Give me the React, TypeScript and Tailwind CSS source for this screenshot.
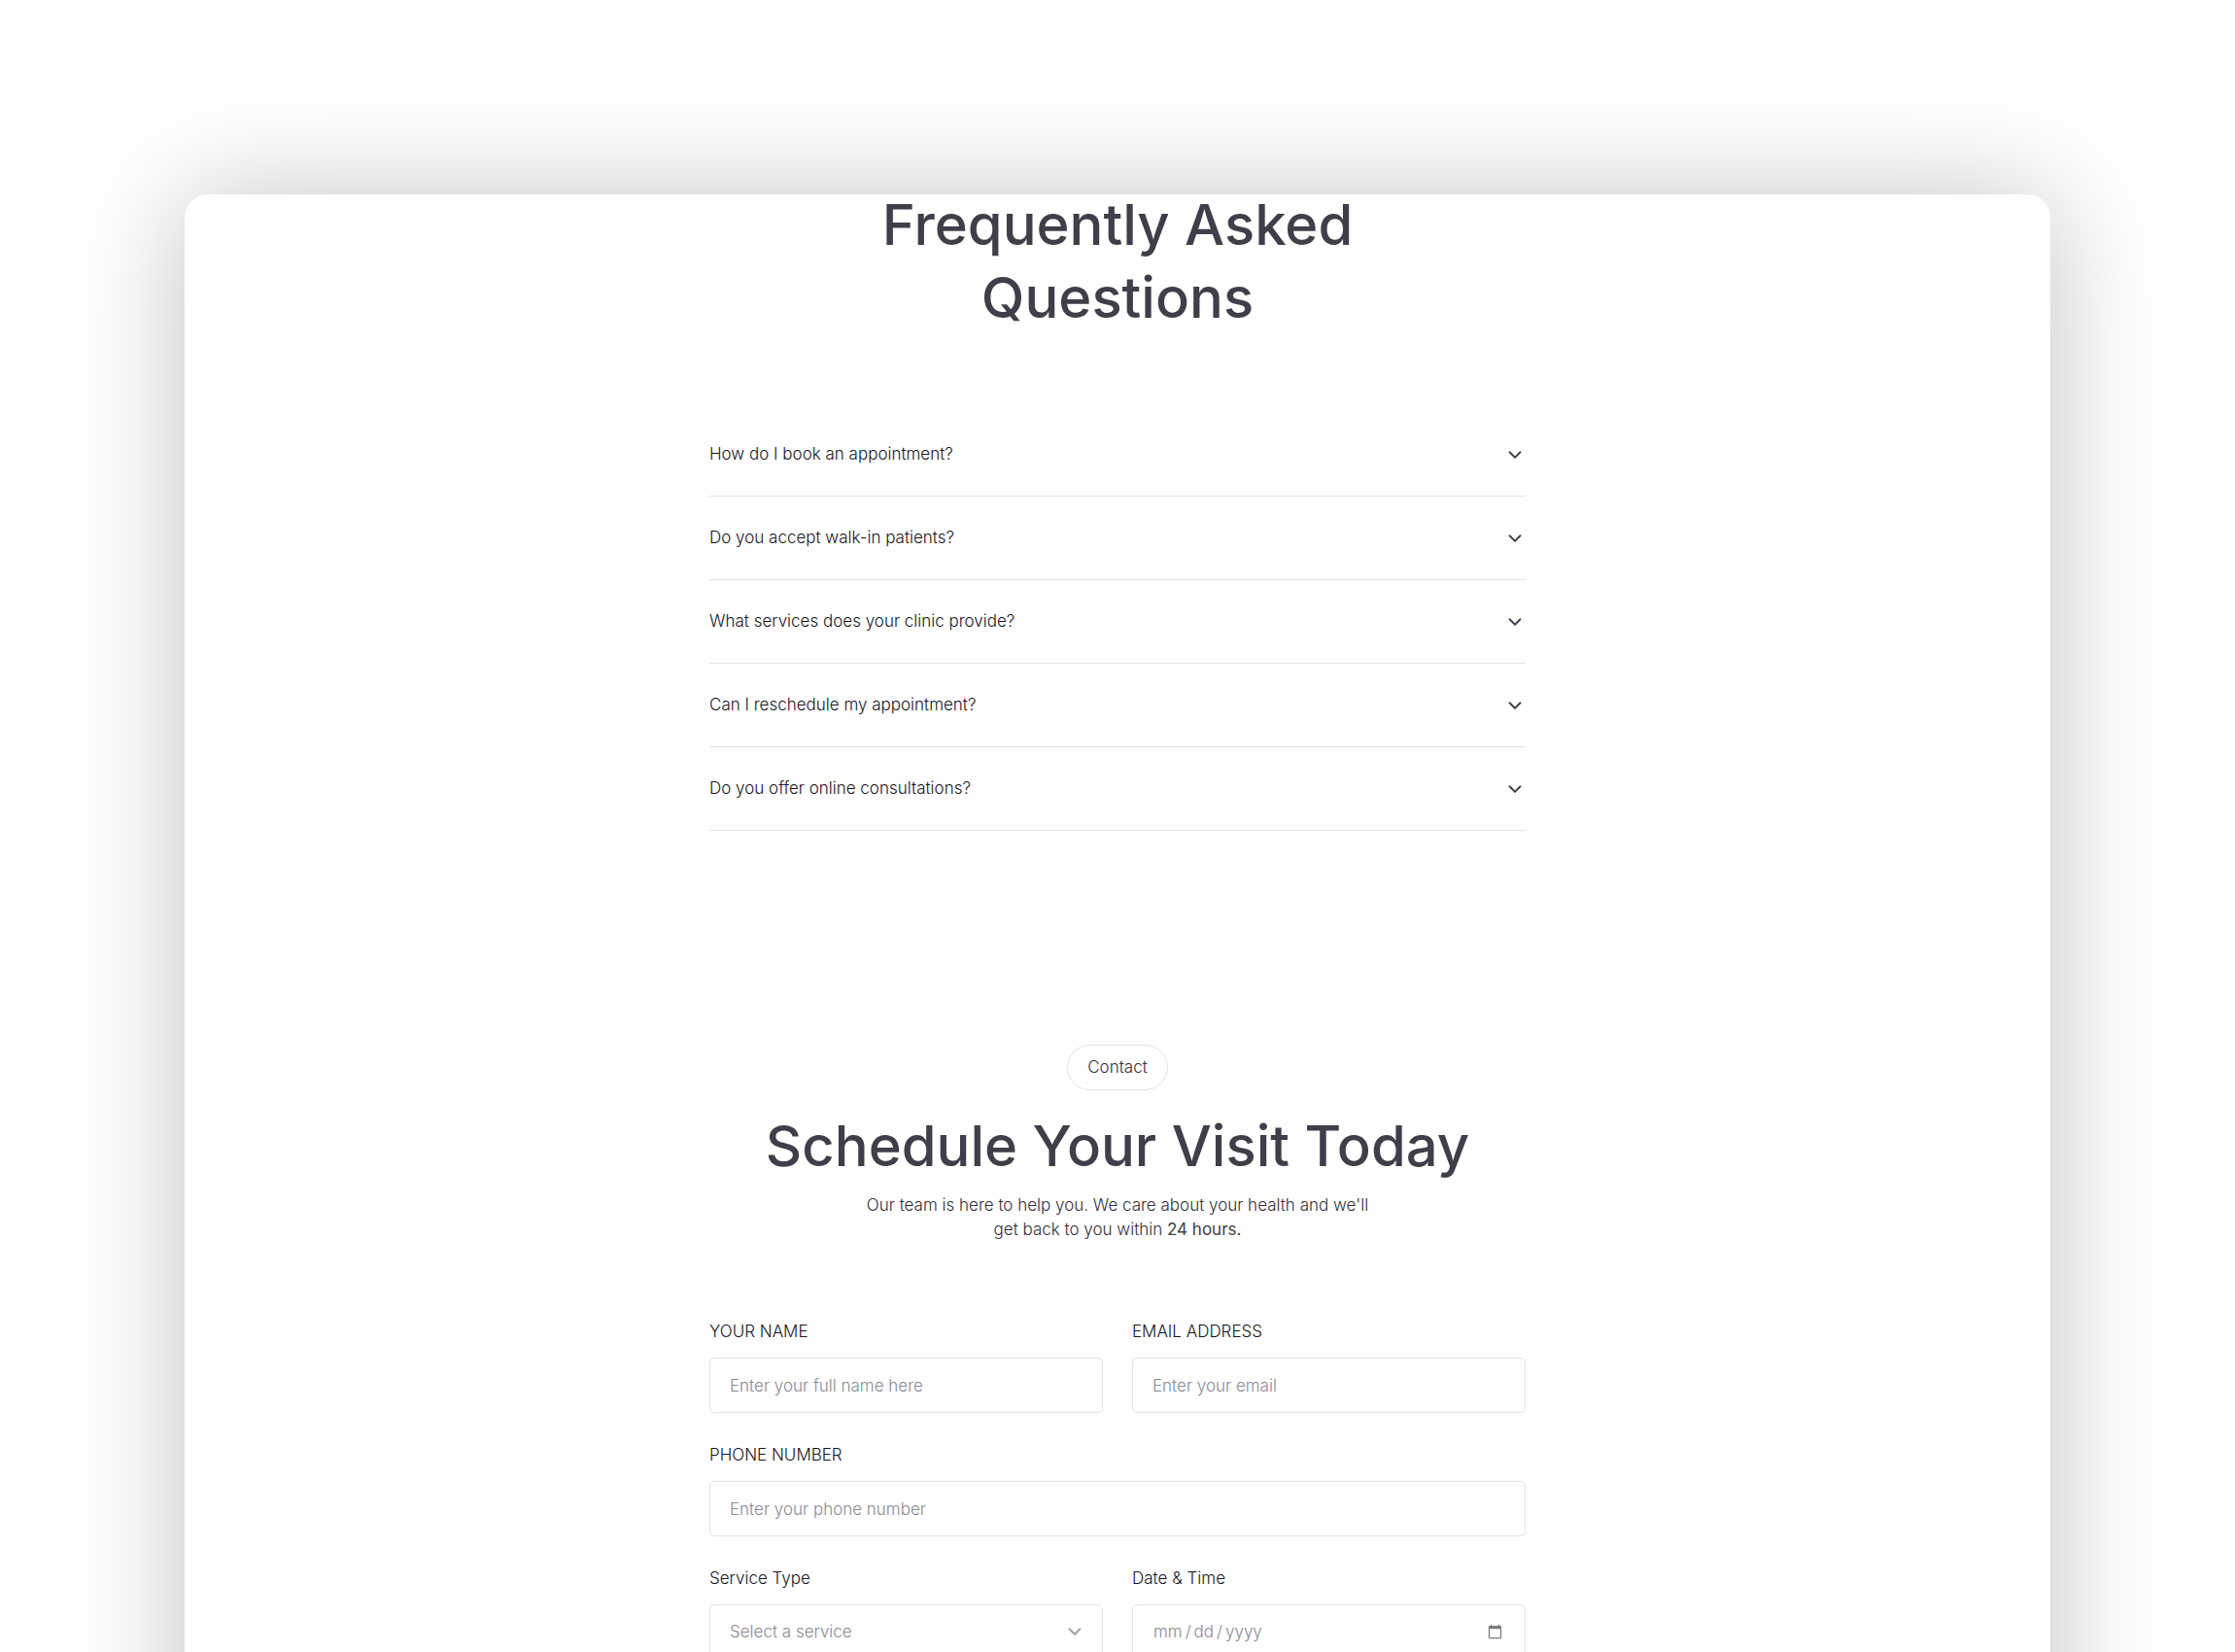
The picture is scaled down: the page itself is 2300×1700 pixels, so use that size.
import React, { useState } from 'react';
import { ChevronDown } from 'lucide-react';

const faqs = [
  'How do I book an appointment?',
  'Do you accept walk-in patients?',
  'What services does your clinic provide?',
  'Can I reschedule my appointment?',
  'Do you offer online consultations?',
];

const fieldClass =
  'h-[57px] w-full rounded-[5px] border border-[#e3e3e5] bg-transparent px-5 text-[17px] font-light text-[#8b8b95] outline-none placeholder:text-[#8b8b95] focus:border-[#403e48]';

function Field({
  id,
  label,
  className = '',
  children,
}: {
  id: string;
  label: string;
  className?: string;
  children: React.ReactNode;
}) {
  return (
    <div className={`flex flex-col gap-[14px] ${className}`}>
      <label htmlFor={id} className="text-[17px] leading-[25px] font-light text-[#18161f]">
        {label}
      </label>
      {children}
    </div>
  );
}

function Faq() {
  const [openIndex, setOpenIndex] = useState<number | null>(null);

  return (
    <section className="flex flex-col items-center gap-[81px]">
      <h2 className="max-w-[600px] text-center text-[58px] leading-[75px] font-medium text-[#403e48]">
        Frequently Asked Questions
      </h2>
      <div className="w-full">
        {faqs.map((question, index) => (
          <div key={question} className="border-b border-[#e3e3e5]">
            <button
              type="button"
              aria-expanded={openIndex === index}
              onClick={() => setOpenIndex(openIndex === index ? null : index)}
              className="flex w-full items-center justify-between py-[30px] text-left text-[17px] leading-[25px] font-light text-[#18161f]"
            >
              {question}
              <ChevronDown className={`h-[22px] w-[22px] text-[#403e48] ${openIndex === index ? 'rotate-180' : ''}`} />
            </button>
          </div>
        ))}
      </div>
    </section>
  );
}

function Contact() {
  const [service, setService] = useState('');

  return (
    <section className="flex flex-col items-center">
      <span className="rounded-full border border-[#e3e3e5] px-5 py-[10px] text-[17px] leading-[25px] font-light text-[#33313b]">
        Contact
      </span>
      <h2 className="mt-5 text-center text-[58px] leading-[75px] font-medium text-[#403e48]">
        Schedule Your Visit Today
      </h2>
      <p className="mt-[11px] max-w-[540px] text-center text-[17px] leading-[25px] font-light text-[#33313b]">
        Our team is here to help you. We care about your health and we'll get back to you within{' '}
        <strong className="font-normal text-[#403e48]">24 hours.</strong>
      </p>

      <form className="mt-20 grid w-full grid-cols-2 gap-x-[30px] gap-y-[31px]">
        <Field id="name" label="YOUR NAME">
          <input id="name" type="text" placeholder="Enter your full name here" className={fieldClass} />
        </Field>
        <Field id="email" label="EMAIL ADDRESS">
          <input id="email" type="email" placeholder="Enter your email" className={fieldClass} />
        </Field>
        <Field id="phone" label="PHONE NUMBER" className="col-span-2">
          <input id="phone" type="tel" placeholder="Enter your phone number" className={fieldClass} />
        </Field>
        <Field id="service" label="Service Type">
          <div className="relative">
            <select
              id="service"
              value={service}
              onChange={(e) => setService(e.target.value)}
              className={`${fieldClass} appearance-none`}
            >
              <option value="">Select a service</option>
            </select>
            <ChevronDown className="pointer-events-none absolute top-[17px] right-[18px] h-[22px] w-[22px] text-[#9d9da6]" />
          </div>
        </Field>
        <Field id="date" label="Date & Time">
          <input
            id="date"
            type="date"
            className={`${fieldClass} [&::-webkit-calendar-picker-indicator]:opacity-50 [&::-webkit-datetime-edit-text]:px-[2px]`}
          />
        </Field>
      </form>
    </section>
  );
}

export default function App() {
  return (
    <div className="h-screen overflow-hidden bg-white pt-[200px] font-['Inter',sans-serif]">
      <main className="mx-auto flow-root w-full max-w-[1920px] rounded-t-3xl bg-[#fefefe] shadow-[0_6px_120px_rgba(0,0,0,0.25)]">
        <div className="mx-auto -mt-1.5 flex max-w-[840px] flex-col gap-[220px] pb-40">
          <Faq />
          <Contact />
        </div>
      </main>
    </div>
  );
}
